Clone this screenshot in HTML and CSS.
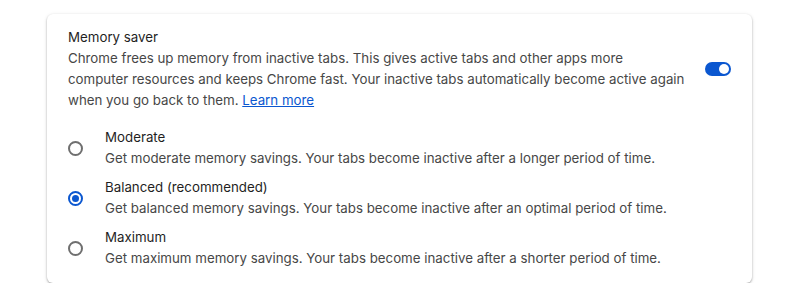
FILE: index.html
```html
<!DOCTYPE html>
<html lang="en">

<head>
  <meta charset="UTF-8">
  <meta name="viewport" content="width=device-width, initial-scale=1.0">
  <title>Memory saver</title>
  <link rel="stylesheet" href="styles.css">
</head>

<body>
  <div class="card">
    <div class="header">
      <div class="header-text">
        <div class="title">Memory saver</div>
        <p class="desc">Chrome frees up memory from inactive tabs. This gives active tabs and other apps more<br>
          computer resources and keeps Chrome fast. Your inactive tabs automatically become active again<br>
          when you go back to them. <a href="#">Learn more</a></p>
      </div>
      <div class="toggle on"><span class="knob"></span></div>
    </div>

    <ul class="options">
      <li class="option">
        <span class="radio"></span>
        <div>
          <div class="label">Moderate</div>
          <div class="sub">Get moderate memory savings. Your tabs become inactive after a longer period of time.</div>
        </div>
      </li>
      <li class="option">
        <span class="radio checked"></span>
        <div>
          <div class="label">Balanced (recommended)</div>
          <div class="sub">Get balanced memory savings. Your tabs become inactive after an optimal period of time.</div>
        </div>
      </li>
      <li class="option">
        <span class="radio"></span>
        <div>
          <div class="label">Maximum</div>
          <div class="sub">Get maximum memory savings. Your tabs become inactive after a shorter period of time.</div>
        </div>
      </li>
    </ul>
  </div>
</body>

</html>
```

FILE: styles.css
```css
* {
  margin: 0;
  padding: 0;
  list-style: none;
  box-sizing: border-box;
}

body {
  background: #fff;
  font-family: 'Inter', 'Roboto', sans-serif;
  font-size: 13.3px;
  line-height: 21px;
  color: #1f1f1f;
  padding: 14px 48px 0 47px;
}

.card {
  width: 705px;
  height: 269px;
  background: #fff;
  border-radius: 6px;
  box-shadow: 0 1px 2px rgba(0, 0, 0, 0.3), 0 1px 4px rgba(0, 0, 0, 0.1);
  padding: 13px 21px 0 21px;
}

.header {
  display: flex;
  align-items: center;
  justify-content: space-between;
}

.title {
  color: #1f1f1f;
}

.desc {
  color: #474747;
  white-space: nowrap;
}

.desc a {
  color: #0b57d0;
}

/* toggle */
.toggle {
  width: 26px;
  height: 14px;
  border-radius: 7px;
  background: #0b57d0;
  position: relative;
}

.toggle .knob {
  position: absolute;
  top: 2px;
  right: 2px;
  width: 10px;
  height: 10px;
  border-radius: 50%;
  background: #fff;
}

/* radio list */
.options {
  margin-top: 12px;
}

.option {
  display: flex;
  align-items: center;
  gap: 22px;
  height: 50px;
}

.radio {
  width: 15px;
  height: 15px;
  border: 2px solid #6f6f6f;
  border-radius: 50%;
  position: relative;
  flex-shrink: 0;
}

.radio.checked {
  border-color: #0b57d0;
}

.radio.checked::after {
  content: '';
  position: absolute;
  top: 2px;
  left: 2px;
  width: 7px;
  height: 7px;
  border-radius: 50%;
  background: #0b57d0;
}

.label {
  color: #1f1f1f;
}

.sub {
  color: #474747;
}
```
